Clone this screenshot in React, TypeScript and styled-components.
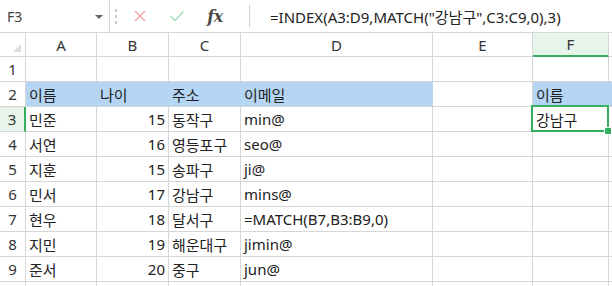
import React from "react";
import styled, { createGlobalStyle } from "styled-components";

const Global = createGlobalStyle`
  html, body { margin: 0; padding: 0; background: #fff; overflow: hidden; }
  body { font-family: "Noto Sans", "Noto Sans CJK KR", sans-serif; }
`;

const FONT = `"Noto Sans", "Noto Sans CJK KR", sans-serif`;
const GRID = "#d6d6d6";
const GREEN = "#34b05f";
const BLUE = "#b4d5f4";

const Page = styled.div`
  width: 612px;
  height: 286px;
  overflow: hidden;
  font-family: ${FONT};
`;

const Toolbar = styled.div`
  display: flex;
  align-items: center;
  height: 32px;
  border-bottom: 1px solid ${GRID};
`;

const NameBox = styled.div`
  display: flex;
  align-items: center;
  justify-content: space-between;
  width: 110px;
  height: 32px;
  padding: 0 6px 0 7px;
  box-sizing: border-box;
  border-right: 1px solid ${GRID};
  font-size: 14px;
  color: #444;
`;

const Caret = styled.span`
  width: 0;
  height: 0;
  border-left: 4px solid transparent;
  border-right: 4px solid transparent;
  border-top: 4px solid #666;
  margin-top: 2px;
`;

const Dots = styled.div`
  display: flex;
  flex-direction: column;
  gap: 3px;
  margin-left: 5px;
  span {
    width: 2px;
    height: 3px;
    background: #c8c8c8;
  }
`;

const IconBtn = styled.div<{ $w: number }>`
  width: ${(p) => p.$w}px;
  display: flex;
  justify-content: center;
  align-items: center;
`;

const Fx = styled.span`
  font-family: "DejaVu Serif", "Liberation Serif", serif;
  font-style: italic;
  font-weight: bold;
  font-size: 16px;
  color: #4a4a4a;
  letter-spacing: -0.5px;
`;

const VSep = styled.div`
  width: 1px;
  height: 22px;
  background: #d0d0d0;
  margin-left: 14px;
`;

const Formula = styled.div`
  margin-left: 20px;
  font-size: 15px;
  color: #222;
  white-space: nowrap;
`;

const Sheet = styled.div`
  display: grid;
  grid-template-columns: 26px 71px 72px 72px 192px 100px 76px 1fr;
  grid-template-rows: 24px repeat(10, 25px);
`;

const Corner = styled.div`
  position: relative;
  border-right: 1px solid ${GRID};
  border-bottom: 1px solid ${GRID};
  &::after {
    content: "";
    position: absolute;
    right: 4px;
    bottom: 4px;
    width: 0;
    height: 0;
    border-left: 8px solid transparent;
    border-bottom: 8px solid #dcdcdc;
  }
`;

const ColHead = styled.div<{ $active?: boolean }>`
  display: flex;
  align-items: center;
  justify-content: center;
  font-size: 15px;
  color: #333;
  border-right: 1px solid ${GRID};
  border-bottom: ${(p) => (p.$active ? `2px solid ${GREEN}` : `1px solid ${GRID}`)};
  background: ${(p) => (p.$active ? "#e6f4ea" : "#fff")};
`;

const RowHead = styled.div<{ $active?: boolean }>`
  display: flex;
  align-items: center;
  justify-content: center;
  font-size: 15px;
  color: #333;
  border-right: ${(p) => (p.$active ? `2px solid ${GREEN}` : `1px solid ${GRID}`)};
  border-bottom: 1px solid ${GRID};
  background: ${(p) => (p.$active ? "#e6f4ea" : "#fff")};
`;

const Cell = styled.div<{ $fill?: boolean; $num?: boolean }>`
  position: relative;
  display: flex;
  align-items: center;
  justify-content: ${(p) => (p.$num ? "flex-end" : "flex-start")};
  padding: 0 3px;
  font-size: 15px;
  color: #222;
  white-space: nowrap;
  overflow: visible;
  min-width: 0;
  background: ${(p) => (p.$fill ? BLUE : "#fff")};
  border-right: 1px solid ${(p) => (p.$fill ? BLUE : GRID)};
  border-bottom: 1px solid ${GRID};
`;

const Overflow = styled.span`
  position: relative;
  z-index: 2;
  background: transparent;
`;

const Selection = styled.div`
  position: absolute;
  left: -2px;
  top: -2px;
  right: -1px;
  bottom: -1px;
  border: 2px solid ${GREEN};
  pointer-events: none;
  z-index: 3;
  &::after {
    content: "";
    position: absolute;
    right: -5px;
    bottom: -5px;
    width: 6px;
    height: 6px;
    background: ${GREEN};
    border: 1px solid #fff;
  }
`;

type Row = {
  a: string;
  b: string;
  c: string;
  d: string;
  f?: string;
};

const rows: Row[] = [
  { a: "", b: "", c: "", d: "" },
  { a: "이름", b: "나이", c: "주소", d: "이메일", f: "이름" },
  { a: "민준", b: "15", c: "동작구", d: "min@", f: "강남구" },
  { a: "서연", b: "16", c: "영등포구", d: "seo@" },
  { a: "지훈", b: "15", c: "송파구", d: "ji@" },
  { a: "민서", b: "17", c: "강남구", d: "mins@" },
  { a: "현우", b: "18", c: "달서구", d: "=MATCH(B7,B3:B9,0)" },
  { a: "지민", b: "19", c: "해운대구", d: "jimin@" },
  { a: "준서", b: "20", c: "중구", d: "jun@" },
  { a: "", b: "", c: "", d: "" },
];

export default function App() {
  return (
    <Page>
      <Global />
      <Toolbar>
        <NameBox>
          <span>F3</span>
          <Caret />
        </NameBox>
        <Dots>
          <span />
          <span />
          <span />
        </Dots>
        <IconBtn $w={38} style={{ marginLeft: 4 }}>
          <svg width="14" height="14" viewBox="0 0 14 14">
            <path d="M2 2 L12 12 M12 2 L2 12" stroke="#f5a3a3" strokeWidth="1.4" fill="none" />
          </svg>
        </IconBtn>
        <IconBtn $w={36}>
          <svg width="16" height="14" viewBox="0 0 16 14">
            <path d="M1.5 7 L6 11.5 L14.5 2.5" stroke="#a6dcb6" strokeWidth="1.4" fill="none" />
          </svg>
        </IconBtn>
        <IconBtn $w={40}>
          <Fx>fx</Fx>
        </IconBtn>
        <VSep />
        <Formula>=INDEX(A3:D9,MATCH("강남구",C3:C9,0),3)</Formula>
      </Toolbar>
      <Sheet>
        <Corner />
        {["A", "B", "C", "D", "E", "F", "G"].map((c) => (
          <ColHead key={c} $active={c === "F"}>
            {c === "G" ? "" : c}
          </ColHead>
        ))}
        {rows.map((r, i) => {
          const n = i + 1;
          const blue = n === 2;
          return (
            <React.Fragment key={n}>
              <RowHead $active={n === 3}>{n <= 9 ? n : ""}</RowHead>
              <Cell $fill={blue}>{r.a}</Cell>
              <Cell $fill={blue} $num={!blue}>
                {r.b}
              </Cell>
              <Cell $fill={blue}>{r.c}</Cell>
              <Cell $fill={blue}>
                <Overflow>{r.d}</Overflow>
              </Cell>
              <Cell />
              <Cell $fill={blue}>
                {r.f}
                {n === 3 && <Selection />}
              </Cell>
              <Cell $fill={blue} />
            </React.Fragment>
          );
        })}
      </Sheet>
    </Page>
  );
}
